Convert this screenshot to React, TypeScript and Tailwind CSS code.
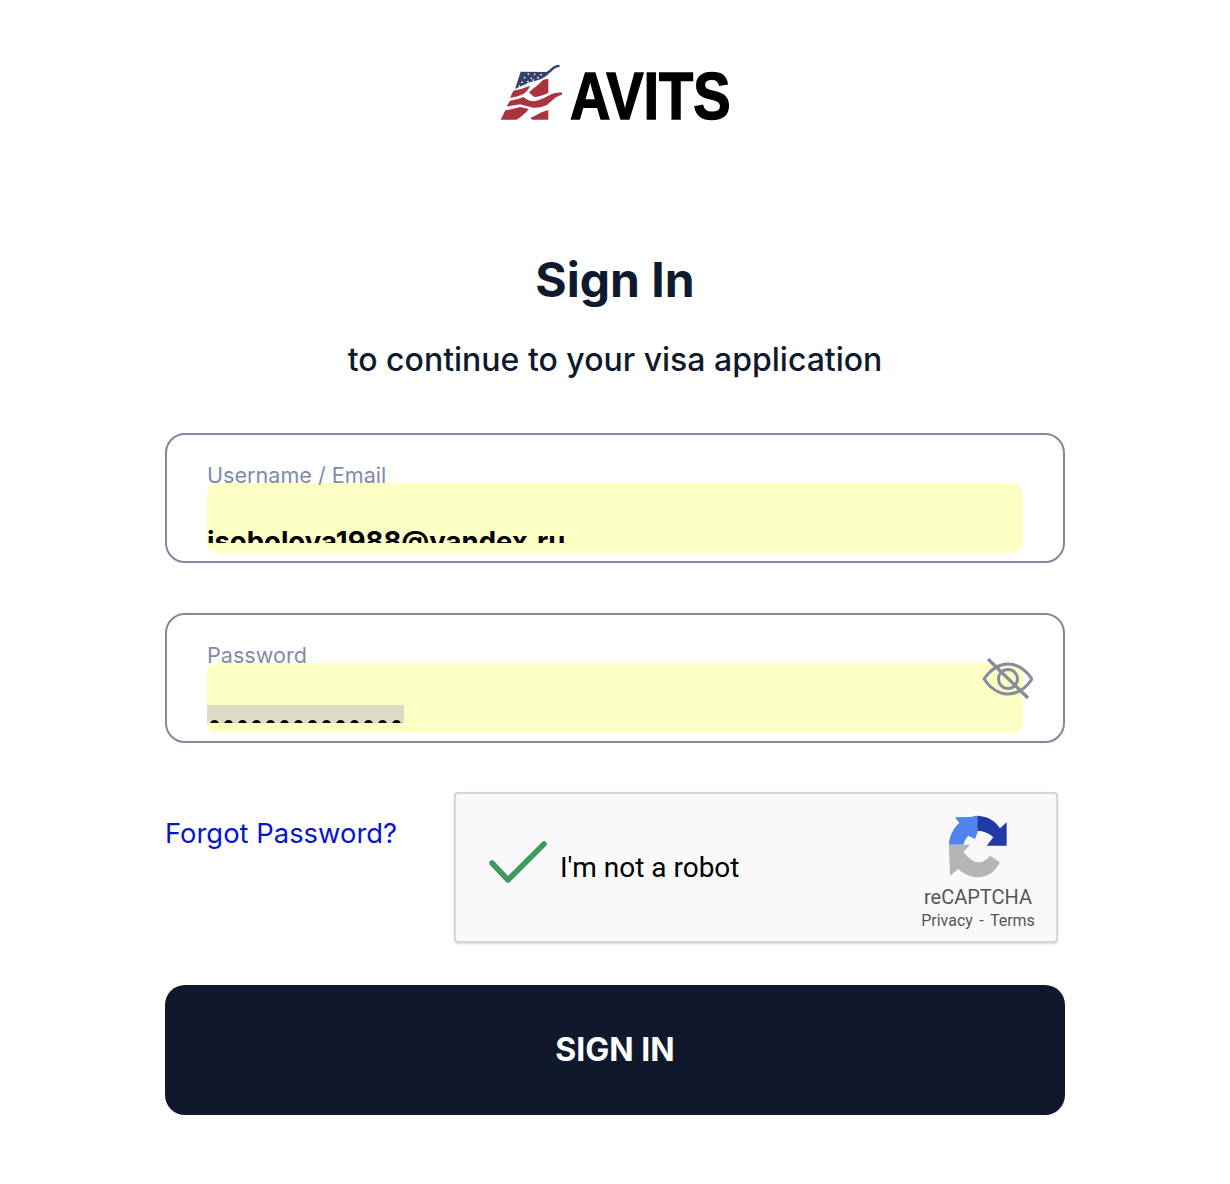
const inter = "font-['Inter',sans-serif]";

function Logo() {
  return (
    <div className="flex items-center justify-center h-[60px]">
      <svg width="63.33" height="58.33" viewBox="30 40 190 175" className="mr-[7px] mb-[5px] shrink-0">
        <path d="M92 66 L168 67 C180 64 184 46 208 45 L209 52 C196 52 190 62 176 72 C168 82 150 90 130 95 C110 100 92 112 75 118 Z" fill="#37416f" />
        <path d="M70 123 C88 120 104 114 120 108 C118 116 112 124 100 133 C88 139 74 143 60 145 Z" fill="#a9343f" />
        <path d="M160 90 L175 87 L175 130 C160 137 145 142 132 142 L117 128 C124 122 130 116 146 104 Z" fill="#a9343f" />
        <path d="M60 153 C75 151 88 148 100 142 C110 150 120 155 132 155 C150 153 165 144 178 137 C188 130 205 128 216 129 L216 135 C200 139 190 149 172 165 C158 172 145 175 130 174 C118 173 105 167 90 164 C78 166 62 169 50 170 Z" fill="#a9343f" />
        <path d="M46 182 C60 180 78 176 90 172 C100 174 108 176 116 178 C108 190 95 200 80 210 L32 210 Z" fill="#a9343f" />
        <path d="M122 204 C135 200 148 188 175 182 L175 210 L126 210 Z" fill="#a9343f" />
        <g fill="#ffffff">
          <circle cx="115" cy="73" r="2.6" /><circle cx="134" cy="74" r="2.6" /><circle cx="153" cy="75" r="2.6" />
          <circle cx="104" cy="84" r="2.6" /><circle cx="124" cy="86" r="2.6" /><circle cx="144" cy="84" r="2.6" />
          <circle cx="96" cy="98" r="2.6" /><circle cx="114" cy="96" r="2.6" /><circle cx="130" cy="91" r="2.6" />
          <circle cx="88" cy="109" r="2.6" />
        </g>
      </svg>
      <div className="w-[159.7px] shrink-0">
        <span className="inline-block origin-left scale-x-[0.835] font-['Liberation_Sans',sans-serif] font-bold text-[67px] leading-none text-black [-webkit-text-stroke:1.5px_black]">AVITS</span>
      </div>
    </div>
  );
}

function Field({ label, children, right }: { label: string; children: React.ReactNode; right?: React.ReactNode }) {
  return (
    <div className="relative h-[130px] w-full rounded-[20px] border-2 border-[#7f899f] bg-white px-[40px] pt-[27px]">
      <div className="text-[21.6px] leading-[26px] text-[#7f8bab]">{label}</div>
      <div className="-mt-[5px] h-[70px] rounded-[10px] bg-[#fbffc4] pb-[10px]">
        <div className="h-full overflow-hidden">{children}</div>
      </div>
      {right}
    </div>
  );
}

function EyeOff() {
  return (
    <svg className="absolute right-[30px] top-[42px]" width="52" height="44" viewBox="0 0 52 44" fill="none" stroke="#868c9f" strokeWidth="3">
      <path d="M3 22 C10 12 18 7 27 7 C36 7 44 12 51 22 C44 32 36 37 27 37 C18 37 10 32 3 22 Z" strokeLinejoin="round" />
      <circle cx="27" cy="22" r="9.5" />
      <path d="M7 2 L47 41" strokeWidth="3.4" />
    </svg>
  );
}

function RecaptchaLogo() {
  return (
    <svg width="76" height="72" viewBox="0 0 228 216" className="shrink-0">
      <path d="M27 107 C28 80 40 58 58 42 L45 25 L92 24 C98 22 105 20 113 20 L113 70 L105 90 L85 80 C78 88 72 96 70 107 Z" fill="#5085ed" />
      <path d="M112 20 C145 22 165 35 180 58 L200 40 L200 110 L140 110 L160 85 C150 74 130 65 112 65 Z" fill="#2239a8" />
      <path d="M27 107 L90 107 L70 130 L85 145 C95 155 105 160 115 160 C130 160 140 152 150 140 L180 160 C165 190 140 205 115 205 C92 205 70 195 55 180 L30 200 Z" fill="#b5b5b5" />
    </svg>
  );
}

export default function App() {
  return (
    <div className={`${inter} min-h-[1184px] bg-white`}>
      <div className="mx-auto w-[900px] pt-[65px]">
        <Logo />
        <h1 className="mt-[127px] text-center text-[48px] leading-[56px] font-bold text-[#101a2e]">Sign In</h1>
        <p className="mt-[30px] text-center text-[32px] leading-[44px] font-medium text-[#101a2e]">to continue to your visa application</p>
        <div className="mt-[51px] flex flex-col gap-[50px]">
          <Field label="Username / Email">
            <div className="pt-[42px] text-[27.5px] leading-[33px] font-bold text-black">isobolova1988@yandex.ru</div>
          </Field>
          <Field label="Password" right={<EyeOff />}>
            <div className="mt-[42px] h-[18px] w-[197px] overflow-hidden bg-[#dbdcc3] pl-[3px] pt-[15px]">
              <div className="flex gap-[5px]">
                {Array.from({ length: 14 }).map((_, i) => (
                  <span key={i} className="h-[9px] w-[9px] shrink-0 rounded-full bg-black" />
                ))}
              </div>
            </div>
          </Field>
        </div>
        <div className="mt-[49px] flex items-start justify-between">
          <a className="mt-[23px] text-[27.4px] leading-[36px] text-[#0a14c8]">Forgot Password?</a>
          <div className="mr-[7px] flex h-[151px] w-[604px] items-center rounded-[4px] border-2 border-[#d6d6d6] bg-[#f9f9f9] shadow-[0_1px_2px_rgba(0,0,0,0.15)] font-['Roboto',sans-serif]">
            <svg className="mb-[12px] ml-[33px] shrink-0" width="60" height="46" viewBox="0 0 60 46" fill="none">
              <path d="M3 24 L19 41 L55 5" stroke="#42985c" strokeWidth="5.5" strokeLinejoin="round" strokeLinecap="round" />
            </svg>
            <span className="ml-[11px] text-[28px] text-black">I'm not a robot</span>
            <div className="ml-auto mr-[20px] flex w-[116px] flex-col items-center self-start pt-[15px]">
              <RecaptchaLogo />
              <span className="mt-[3px] text-[20px] leading-[26px] text-[#555555]">reCAPTCHA</span>
              <span className="mt-[1px] text-[16px] leading-[20px] whitespace-nowrap text-[#555555] [word-spacing:2.5px]">Privacy - Terms</span>
            </div>
          </div>
        </div>
        <button className="mt-[42px] h-[130px] w-full rounded-[20px] bg-[#10192c] text-[32px] font-bold text-white">SIGN IN</button>
      </div>
    </div>
  );
}
